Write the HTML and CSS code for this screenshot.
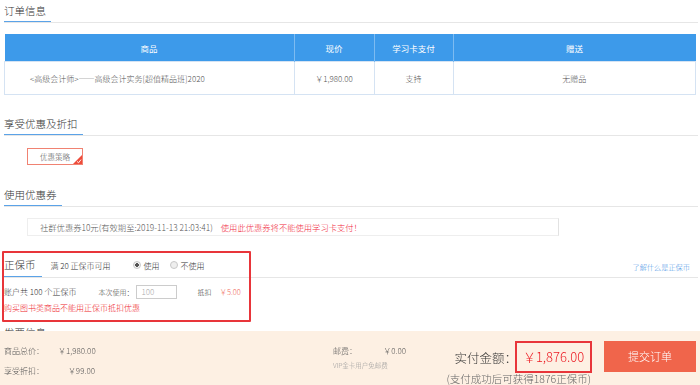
FILE: index.html
```html
<!DOCTYPE html>
<html lang="zh-CN">
<head>
    <meta charset="UTF-8">
    <meta name="viewport" content="width=device-width, initial-scale=1.0">
    <title>确认订单</title>
    <link rel="stylesheet" href="styles.css">
</head>
<body>
    <div class="page">
        <!-- 订单信息 -->
        <div class="sec-head"><span class="sec-title">订单信息</span></div>
        <table class="order-table">
            <thead>
                <tr>
                    <th class="col-name">商品</th>
                    <th class="col-price">现价</th>
                    <th class="col-card">学习卡支付</th>
                    <th>赠送</th>
                </tr>
            </thead>
            <tbody>
                <tr>
                    <td class="name-cell">&lt;高级会计师&gt;——高级会计实务[超值精品班]2020</td>
                    <td>￥1,980.00</td>
                    <td>支持</td>
                    <td>无赠品</td>
                </tr>
            </tbody>
        </table>

        <!-- 享受优惠及折扣 -->
        <div class="sec-head sec-gap"><span class="sec-title">享受优惠及折扣</span></div>
        <div class="promo-row">
            <span class="promo-btn">优惠策略
                <svg class="promo-check" width="9" height="9" viewBox="0 0 9 9">
                    <polygon points="9,0 9,9 0,9" fill="#ee4b3a"/>
                    <polyline points="4,6.4 5.6,7.8 8,4.6" fill="none" stroke="#fff" stroke-width="0.9"/>
                </svg>
            </span>
        </div>

        <!-- 使用优惠券 -->
        <div class="sec-head sec-gap2"><span class="sec-title">使用优惠券</span></div>
        <div class="coupon">
            社群优惠券10元(有效期至:2019-11-13 21:03:41)<span class="coupon-warn">使用此优惠券将不能使用学习卡支付！</span>
        </div>

        <!-- 正保币 -->
        <div class="coin">
            <div class="coin-head">
                <span class="sec-title">正保币</span>
                <span class="coin-min">满 20 正保币可用</span>
                <span class="radio checked"></span><span class="radio-label">使用</span>
                <span class="radio"></span><span class="radio-label">不使用</span>
                <a class="coin-link" href="#">了解什么是正保币</a>
            </div>
            <div class="coin-row">
                <span class="coin-total">账户共 100 个正保币</span>
                <span class="coin-use">本次使用：</span>
                <span class="coin-input">100</span>
                <span class="coin-off">抵扣</span>
                <span class="coin-money">￥5.00</span>
            </div>
            <div class="coin-warn">购买图书类商品不能用正保币抵扣优惠</div>
            <div class="mark-box"></div>
        </div>

        <!-- 发票信息 -->
        <div class="sec-head"><span class="sec-title">发票信息</span></div>
    </div>

    <!-- 结算栏 -->
    <div class="footer">
        <div class="sum-col">
            <div class="sum-row"><span class="sum-label">商品总价：</span><span class="sum-val">￥1,980.00</span></div>
            <div class="sum-row"><span class="sum-label">享受折扣：</span><span class="sum-val">￥99.00</span></div>
        </div>
        <div class="mail-col">
            <div class="sum-row"><span class="mail-label">邮费：</span><span class="mail-val">￥0.00</span></div>
            <div class="mail-note">VIP金卡用户免邮费</div>
        </div>
        <div class="pay-col">
            <div class="pay-row">
                <span class="pay-label">实付金额：</span>
                <span class="pay-price">￥1,876.00</span>
            </div>
            <div class="pay-note">(支付成功后可获得1876正保币)</div>
        </div>
        <a class="submit-btn" href="#">提交订单</a>
    </div>
</body>
</html>
```

FILE: styles.css
```css
body {
    margin: 0;
    padding: 0;
    font-family: "Noto Sans CJK SC", "Liberation Sans", sans-serif;
    font-weight: 300;
    color: #333;
    background-color: white;
    overflow: hidden;
}

.page {
    padding: 0 2px 0 4px;
}

/* 标题 */
.sec-head {
    display: flex;
    border-bottom: 1px solid #e6e6e6;
    height: 22px;
}

.sec-title {
    font-size: 10.5px;
    line-height: 22px;
    padding-right: 5px;
    border-bottom: 1px solid #5ba3e8;
    color: #333;
}

.sec-gap {
    margin-top: 18px;
}

.sec-gap2 {
    margin-top: 19px;
}

/* 订单表格 */
.order-table {
    width: 692px;
    margin-top: 11px;
    border-collapse: collapse;
    table-layout: fixed;
    font-size: 8px;
    text-align: center;
}

.order-table th {
    height: 27px;
    padding: 0;
    background-color: #3d9aea;
    color: white;
    font-weight: normal;
    font-size: 8.5px;
    border-left: 1px solid #7dbbf1;
}

.order-table th:first-child {
    border-left: none;
}

.order-table td {
    height: 32px;
    padding: 0;
    color: #555;
    border: 1px solid #d5e3f3;
}

.order-table td.name-cell {
    text-align: left;
    padding-left: 25px;
}

.col-name { width: 289px; }
.col-price { width: 79px; }
.col-card { width: 78px; }

/* 优惠策略 */
.promo-row {
    display: flex;
    padding: 12px 0 0 23px;
}

.promo-btn {
    position: relative;
    width: 54px;
    height: 15px;
    line-height: 15px;
    border: 1px solid #f08272;
    font-size: 7.5px;
    color: #555;
    text-align: center;
}

.promo-check {
    position: absolute;
    right: 0;
    bottom: 0;
}

/* 优惠券 */
.coupon {
    width: 518px;
    height: 16px;
    line-height: 16px;
    margin: 11px 0 0 23px;
    padding-left: 12px;
    border: 1px solid #eee;
    border-right-color: #e2e2e2;
    font-size: 8.3px;
    color: #555;
}

.coupon-warn {
    margin-left: 8px;
    color: #f0283c;
}

/* 正保币 */
.coin {
    position: relative;
    margin-top: 17px;
}

.coin-head {
    display: flex;
    align-items: center;
    height: 24px;
    border-bottom: 1px solid #e6e6e6;
}

.coin-head .sec-title {
    align-self: flex-end;
    padding-right: 6px;
}

.coin-min {
    margin-left: 9px;
    font-size: 8px;
}

.radio {
    width: 6px;
    height: 6px;
    margin: 0 3px 0 22px;
    border: 1px solid #c8c8c8;
    border-radius: 50%;
    background: #eee;
    box-sizing: content-box;
}

.radio.checked {
    background: radial-gradient(circle, #555 0 1.6px, #f2f2f2 2px);
}

.radio + .radio-label + .radio {
    margin-left: 10px;
}

.radio-label {
    font-size: 8px;
}

.coin-link {
    margin: 4px 8px 0 auto;
    font-size: 7.2px;
    color: #4c95e6;
    text-decoration: none;
}

.coin-row {
    display: flex;
    align-items: center;
    height: 21px;
    margin-top: 3px;
    font-size: 8px;
}

.coin-use {
    margin-left: 22px;
    font-size: 7px;
    color: #444;
}

.coin-input {
    width: 35px;
    height: 12px;
    line-height: 12px;
    margin-left: 3px;
    padding-left: 4px;
    border: 1px solid #ccc;
    color: #aaa;
    font-size: 8px;
}

.coin-off {
    margin-left: 20px;
    font-size: 7px;
}

.coin-money {
    margin-left: 8px;
    font-size: 7.5px;
    color: #f07060;
}

.coin-warn {
    font-size: 8px;
    line-height: 12px;
    color: #ee1b2a;
}

.mark-box {
    position: absolute;
    left: -2px;
    top: -2px;
    width: 245px;
    height: 67px;
    border: 2px solid #e8353a;
    border-radius: 1px;
}

.coin + .sec-head {
    margin-top: 8px;
}

/* 结算栏 */
.footer {
    position: fixed;
    left: 0;
    right: 0;
    bottom: 0;
    height: 54px;
    display: flex;
    padding-left: 4px;
    background-color: #fdf0e3;
}

.sum-col {
    width: 329px;
    padding-top: 9px;
}

.sum-row {
    display: flex;
    height: 20px;
    align-items: center;
    font-size: 8px;
    color: #555;
}

.sum-label {
    width: 54px;
}

.sum-val {
    width: 37px;
    text-align: right;
}

.mail-col {
    width: 110px;
    padding-top: 9px;
}

.mail-label {
    width: 46px;
}

.mail-val {
    width: 27px;
    text-align: right;
}

.mail-note {
    font-size: 6.5px;
    color: #999;
    line-height: 10px;
}

.pay-col {
    width: 149px;
    padding-top: 10px;
    display: flex;
    flex-direction: column;
    align-items: flex-end;
}

.pay-row {
    display: flex;
    align-items: center;
}

.pay-label {
    font-size: 12.5px;
    color: #333;
    margin-right: -2px;
}

.pay-price {
    width: 73px;
    height: 28px;
    line-height: 28px;
    border: 2px solid #e8353a;
    text-align: center;
    font-size: 13px;
    color: #ec1c24;
}

.pay-note {
    font-size: 10.5px;
    line-height: 12px;
    color: #666;
    white-space: nowrap;
    margin-right: 1px;
}

.submit-btn {
    width: 92px;
    height: 31px;
    line-height: 31px;
    margin: 10px 0 0 12px;
    background-color: #f0654b;
    color: white;
    font-size: 11px;
    text-align: center;
    text-decoration: none;
}
```
